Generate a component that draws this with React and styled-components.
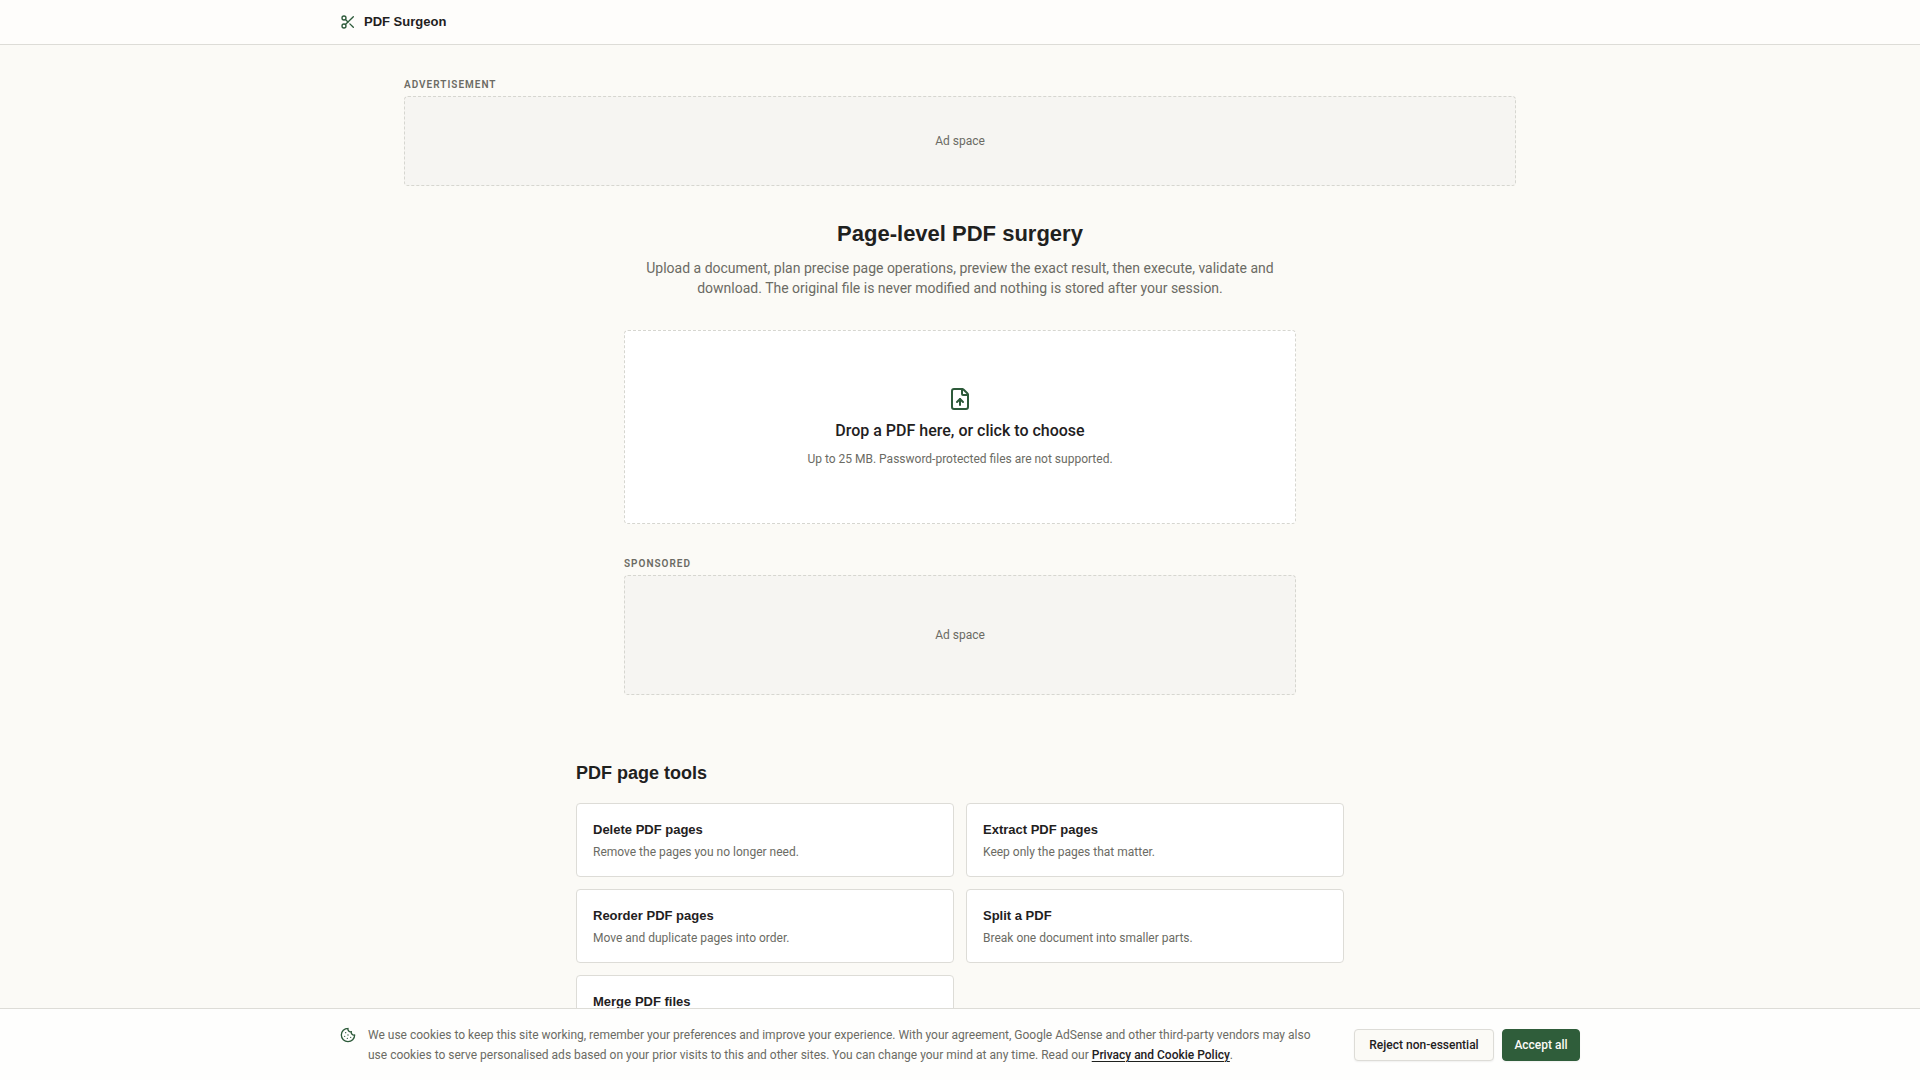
import React from 'react';
import styled, { createGlobalStyle, css } from 'styled-components'
import { Scissors, FileUp, Cookie } from 'lucide-react'

const Global = createGlobalStyle`
    *, *::before, *::after {
        box-sizing: border-box;
    }

    body {
        margin: 0;
        background: #fbfaf6;
        color: #1f211e;
        font-family: Roboto, "Liberation Sans", sans-serif;
        font-size: 14px;
        line-height: 20px;
    }

    h1, h2, h3, p {
        margin: 0;
    }
`

const heading = css`
    font-family: "Liberation Sans", Arial, sans-serif;
    font-weight: 600;
`
const dashed = css`
    border: 1px dashed #d6d6d0;
    border-radius: 4px;
`

const Header = styled.header`
    background: #fefdfb;
    border-bottom: 1px solid #dddcd7;
`;
const Container = styled.div`
    max-width: 1280px;
    margin: 0 auto;
    padding: 0 20px;
`;
const Brand = styled.a`
    ${heading}
    display: inline-flex;
    align-items: center;
    gap: 8px;
    height: 44px;
    color: inherit;
    font-size: 13px;
    text-decoration: none;

    svg {
        color: #2d5a3a;
    }
`;
const Main = styled.main`
    display: flex;
    flex-direction: column;
    gap: 32px;
    padding: 32px 20px 24px;
`;
const Section = styled.section`
    width: 100%;
    max-width: ${props => props.$width};
    margin: 0 auto;
`;
const AdLabel = styled.p`
    margin-bottom: 4px;
    color: #6b6b64;
    font-size: 10px;
    font-weight: 600;
    line-height: 15px;
    letter-spacing: 0.1em;
    text-transform: uppercase;
`;
const AdBox = styled.div`
    ${dashed}
    display: flex;
    align-items: center;
    justify-content: center;
    min-height: ${props => props.$height};
    background: #f6f5f2;
    color: #6b6b64;
    font-size: 12px;
`;
const Intro = styled(Section)`
    text-align: center;

    h1 {
        ${heading}
        margin-bottom: 8px;
        font-size: 22px;
        line-height: 32px;
    }

    p {
        color: #6b6b64;
    }
`;
const DropZone = styled.label`
    ${dashed}
    display: flex;
    flex-direction: column;
    align-items: center;
    gap: 8px;
    padding: 56px 24px;
    background: #fff;
    cursor: pointer;

    svg {
        color: #2d5a3a;
    }

    &:focus-within {
        border-color: #2d5a3a;
    }
`;
const FileInput = styled.input`
    position: absolute;
    width: 1px;
    height: 1px;
    opacity: 0;
`;
const DropTitle = styled.span`
    font-size: 16px;
    font-weight: 500;
    line-height: 24px;
`;
const Hint = styled.span`
    color: #6b6b64;
    font-size: 12px;
    line-height: 16px;
`;
const Tools = styled(Section)`
    margin-top: 32px;

    h2 {
        ${heading}
        margin-bottom: 16px;
        font-size: 18px;
        line-height: 28px;
    }
`;
const ToolGrid = styled.div`
    display: grid;
    grid-template-columns: repeat(2, 1fr);
    gap: 12px;
`;
const ToolCard = styled.a`
    display: flex;
    flex-direction: column;
    gap: 4px;
    min-height: 74px;
    padding: 16px;
    border: 1px solid #dddcd7;
    border-radius: 4px;
    background: #fff;
    color: inherit;
    text-decoration: none;

    &:hover {
        border-color: #2d5a3a;
    }

    h3 {
        ${heading}
        font-size: 13px;
        line-height: 20px;
    }
`;
const CookieBar = styled.aside`
    position: fixed;
    right: 0;
    bottom: 0;
    left: 0;
    border-top: 1px solid #dddcd7;
    background: #fefefd;
`;
const CookieContent = styled(Container)`
    display: flex;
    align-items: center;
    gap: 24px;
    padding: 16px 20px 15px;
`;
const CookieText = styled.div`
    display: flex;
    flex: 1;
    gap: 12px;
    color: #6b6b64;
    font-size: 12px;

    svg {
        flex: none;
        margin-top: 2px;
        color: #2d5a3a;
    }

    a {
        color: #1f211e;
        font-weight: 500;
        text-underline-offset: 2px;
    }
`;
const Actions = styled.div`
    display: flex;
    gap: 8px;
`;
const Button = styled.button`
    min-width: ${props => props.$primary ? '78px' : '140px'};
    height: 32px;
    padding: 0 11px;
    border: 1px solid ${props => props.$primary ? '#2f5d3a' : '#dddcd7'};
    border-radius: 4px;
    background: ${props => props.$primary ? '#2f5d3a' : '#fbfaf6'};
    color: ${props => props.$primary ? '#fbfaf6' : '#1f211e'};
    box-shadow: 0 1px 2px rgba(0, 0, 0, 0.06);
    font-family: inherit;
    font-size: 12px;
    font-weight: 500;
    cursor: pointer;
`;

const tools = [
    { title: 'Delete PDF pages', text: 'Remove the pages you no longer need.', href: '#delete' },
    { title: 'Extract PDF pages', text: 'Keep only the pages that matter.', href: '#extract' },
    { title: 'Reorder PDF pages', text: 'Move and duplicate pages into order.', href: '#reorder' },
    { title: 'Split a PDF', text: 'Break one document into smaller parts.', href: '#split' },
    { title: 'Merge PDF files', href: '#merge' },
]

const AdSlot = ({ label, width, height }) => (
    <Section $width={width}>
        <AdLabel>{label}</AdLabel>
        <AdBox $height={height}>Ad space</AdBox>
    </Section>
)

const App = () => {
    return (
        <>
            <Global />
            <Header>
                <Container>
                    <Brand href="#home">
                        <Scissors size={16} />
                        PDF Surgeon
                    </Brand>
                </Container>
            </Header>

            <Main>
                <AdSlot label="Advertisement" width="1112px" height="90px" />
                <Intro $width="672px">
                    <h1>Page-level PDF surgery</h1>
                    <p>
                        Upload a document, plan precise page operations, preview the exact result, then
                        execute, validate and download. The original file is never modified and nothing
                        is stored after your session.
                    </p>
                </Intro>
                <Section $width="672px">
                    <DropZone htmlFor="pdf-file">
                        <FileInput id="pdf-file" type="file" accept="application/pdf" />
                        <FileUp size={24} />
                        <DropTitle>Drop a PDF here, or click to choose</DropTitle>
                        <Hint>Up to 25 MB. Password-protected files are not supported.</Hint>
                    </DropZone>
                </Section>
                <AdSlot label="Sponsored" width="672px" height="120px" />
                <Tools $width="768px">
                    <h2>PDF page tools</h2>
                    <ToolGrid>
                        {tools.map(({ title, text, href }) => (
                            <ToolCard key={title} href={href}>
                                <h3>{title}</h3>
                                {text && <Hint>{text}</Hint>}
                            </ToolCard>
                        ))}
                    </ToolGrid>
                </Tools>
            </Main>

            <CookieBar>
                <CookieContent>
                    <CookieText>
                        <Cookie size={16} />
                        <p>
                            We use cookies to keep this site working, remember your preferences and
                            improve your experience. With your agreement, Google AdSense and other
                            third-party vendors may also use cookies to serve personalised ads based on
                            your prior visits to this and other sites. You can change your mind at any
                            time. Read our <a href="#privacy">Privacy and Cookie Policy</a>.
                        </p>
                    </CookieText>
                    <Actions>
                        <Button type="button">Reject non-essential</Button>
                        <Button type="button" $primary>Accept all</Button>
                    </Actions>
                </CookieContent>
            </CookieBar>
        </>
    );
}

export default App;
